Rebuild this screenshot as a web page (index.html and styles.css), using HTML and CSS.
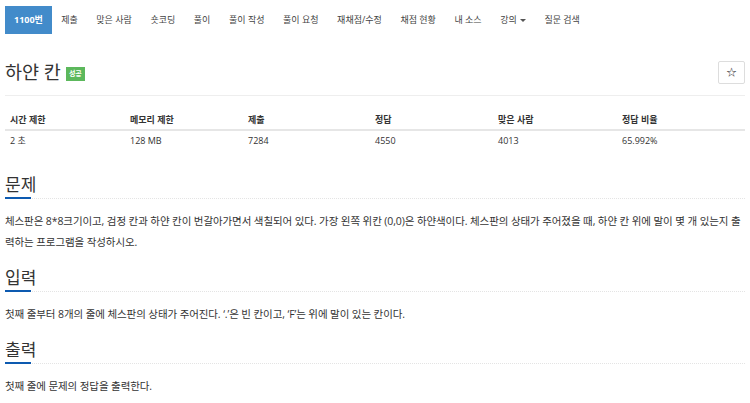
FILE: index.html
```html
<!DOCTYPE html>
<html lang="ko">
<head>
    <meta charset="UTF-8">
    <title>1100번: 하얀 칸</title>
    <link rel="stylesheet" href="styles.css">
</head>
<body>
    <div class="container">
        <ul class="problem-menu">
            <li class="active"><a href="#">1100번</a></li>
            <li><a href="#">제출</a></li>
            <li><a href="#">맞은 사람</a></li>
            <li><a href="#">숏코딩</a></li>
            <li><a href="#">풀이</a></li>
            <li><a href="#">풀이 작성</a></li>
            <li><a href="#">풀이 요청</a></li>
            <li><a href="#">재채점/수정</a></li>
            <li><a href="#">채점 현황</a></li>
            <li><a href="#">내 소스</a></li>
            <li><a href="#">강의<span class="caret"></span></a></li>
            <li><a href="#">질문 검색</a></li>
        </ul>

        <div class="page-header">
            <h3>
                <span id="problem_title">하얀 칸</span>
                <span class="label label-success">성공</span>
            </h3>
            <button class="btn-star">&#9734;</button>
        </div>

        <table class="problem-info">
            <thead>
                <tr>
                    <th>시간 제한</th>
                    <th>메모리 제한</th>
                    <th>제출</th>
                    <th>정답</th>
                    <th>맞은 사람</th>
                    <th>정답 비율</th>
                </tr>
            </thead>
            <tbody>
                <tr>
                    <td>2 초</td>
                    <td>128 MB</td>
                    <td>7284</td>
                    <td>4550</td>
                    <td>4013</td>
                    <td>65.992%</td>
                </tr>
            </tbody>
        </table>

        <section class="problem-section">
            <div class="headline"><h2>문제</h2></div>
            <p>체스판은 8*8크기이고, 검정 칸과 하얀 칸이 번갈아가면서 색칠되어 있다. 가장 왼쪽 위칸 (0,0)은 하얀색이다. 체스판의 상태가 주어졌을 때, 하얀 칸 위에 말이 몇 개 있는지 출력하는 프로그램을 작성하시오.</p>
        </section>

        <section class="problem-section">
            <div class="headline"><h2>입력</h2></div>
            <p>첫째 줄부터 8개의 줄에 체스판의 상태가 주어진다. ‘.’은 빈 칸이고, ‘F’는 위에 말이 있는 칸이다.</p>
        </section>

        <section class="problem-section">
            <div class="headline"><h2>출력</h2></div>
            <p>첫째 줄에 문제의 정답을 출력한다.</p>
        </section>
    </div>
</body>
</html>
```

FILE: styles.css
```css
body {
    margin: 0;
    font-family: "Open Sans", "Noto Sans CJK KR", sans-serif;
    color: #333;
    background: #fff;
}
.container {
    padding: 0 5px;
}
.problem-menu {
    list-style: none;
    margin: 0;
    padding: 6px 0 0;
    display: flex;
    height: 28px;
}
.problem-menu li a {
    display: block;
    height: 28px;
    line-height: 28px;
    padding: 0 9.3px;
    font-size: 9px;
    color: #444;
    text-decoration: none;
}
.problem-menu li.active a {
    background: #428bca;
    color: #fff;
    font-weight: 700;
    padding: 0 9px;
}
.caret {
    display: inline-block;
    width: 0;
    height: 0;
    margin-left: 3px;
    vertical-align: middle;
    border-top: 3px solid #555;
    border-left: 3px solid transparent;
    border-right: 3px solid transparent;
}
.page-header {
    display: flex;
    justify-content: space-between;
    align-items: center;
    margin-top: 26px;
    padding-bottom: 11px;
    border-bottom: 1px solid #eee;
}
.page-header h3 {
    margin: 0;
    font-size: 18.5px;
    font-weight: 400;
    line-height: 24px;
    display: flex;
    align-items: center;
    gap: 5px;
}
.label {
    display: inline-block;
    font-size: 7px;
    font-weight: 700;
    color: #fff;
    padding: 3px 3px;
    line-height: 8px;
    margin-top: 4px;
}
.label-success {
    background: #5cb85c;
}
.btn-star {
    width: 27px;
    height: 23px;
    background: #fff;
    border: 1px solid #ddd;
    border-radius: 2px;
    font-size: 11px;
    color: #333;
    padding: 0;
}
.problem-info {
    width: 100%;
    border-collapse: collapse;
    margin: 11px 0 20px;
    table-layout: fixed;
    font-size: 9px;
}
.problem-info th {
    text-align: left;
    font-weight: 700;
    padding: 6px 5px 3px;
    border-bottom: 2px solid #e6e6e6;
}
.problem-info th:nth-child(1) { width: 110px; }
.problem-info th:nth-child(2) { width: 108px; }
.problem-info th:nth-child(3) { width: 117px; }
.problem-info th:nth-child(4) { width: 113px; }
.problem-info th:nth-child(5) { width: 114px; }
.problem-info td {
    padding: 3px 5px 6px;
}
.problem-section {
    margin-top: 10px;
}
.headline {
    border-bottom: 1px dotted #e4e4e4;
    margin-bottom: 12px;
}
.headline h2 {
    display: inline-block;
    margin: 0 0 -1px;
    font-size: 17px;
    font-weight: 400;
    line-height: 24px;
    border-bottom: 2px solid #0d5ab0;
    width: 26px;
    white-space: nowrap;
}
.problem-section p {
    margin: 0 0 13px;
    font-size: 10.5px;
    letter-spacing: -0.1px;
    line-height: 21px;
    color: #333;
}
```
